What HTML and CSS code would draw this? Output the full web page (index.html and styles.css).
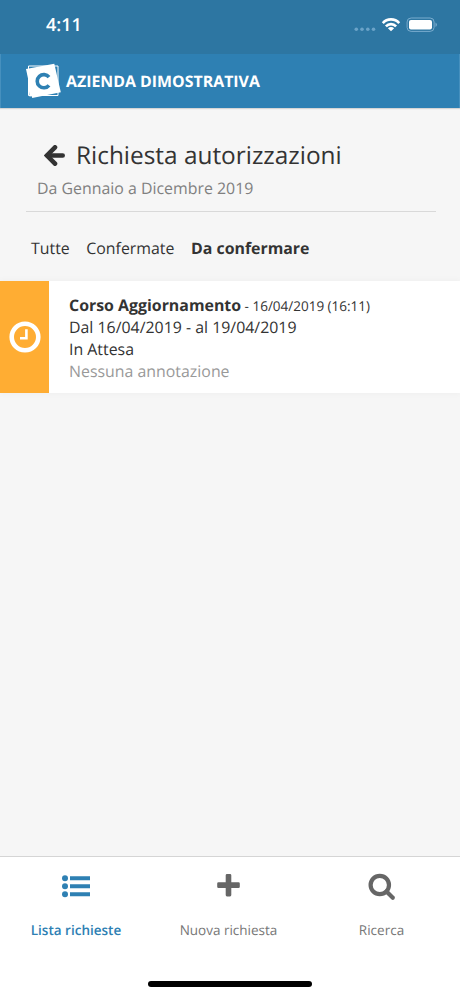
FILE: index.html
```html
<!DOCTYPE html>
<html lang="it">
<head>
<meta charset="utf-8">
<title>Richiesta autorizzazioni</title>
<link rel="stylesheet" href="styles.css">
</head>
<body>
<div class="app">
  <div class="status">
    <span class="time">4:11</span>
    <svg class="indicators" width="84" height="18" viewBox="0 0 84 18">
      <g fill="#6ba3c8"><circle cx="3.3" cy="13.3" r="1.8"/><circle cx="9" cy="13.3" r="1.8"/><circle cx="14.8" cy="13.3" r="1.8"/><circle cx="20.5" cy="13.3" r="1.8"/></g>
      <g fill="none" stroke="#fff" stroke-width="2.6"><path d="M29.8 7.1a10.9 10.9 0 0 1 16.4 0"/><path d="M32.9 10.3a7 7 0 0 1 10.2 0"/></g>
      <path fill="#fff" d="M34.9 12.3a4.3 4.3 0 0 1 6.2 0L38 15.3z"/>
      <rect x="54.1" y="2" width="27" height="13.4" rx="4" fill="none" stroke="#79acce"/>
      <rect x="56" y="4" width="23" height="9.5" rx="2" fill="#fff"/>
      <path d="M82.5 6.5a2.5 2.5 0 0 1 0 4.5z" fill="#79acce"/>
    </svg>
  </div>
  <header class="header">
    <svg class="logo" width="36" height="36" viewBox="0 0 36 36">
      <path d="M3.5 3H33V32.5H3.500z" fill="none" stroke="#fff" stroke-width="1"/>
      <path d="M3 18L4.500 33.500L20 32z" fill="#fff"/>
      <path d="M1 6L29.300.8L35.800 29.200L7.200 35z" fill="#fff"/>
      <path d="M24 14.100a6.600 6.600 0 1 0 0 8.200" fill="none" stroke="#2e80b3" stroke-width="3.600"/>
    </svg>
    <span class="company">AZIENDA DIMOSTRATIVA</span>
  </header>
  <main class="content">
    <section class="heading">
      <div class="title-row">
        <svg width="21" height="21" viewBox="0 0 21 21" fill="none" stroke="#333" stroke-width="4.6" stroke-linecap="round"><path d="M3.500 10.500H18.700"/><path d="M11 2.300L2.900 10.500L11 18.700"/></svg>
        <h1>Richiesta autorizzazioni</h1>
      </div>
      <p class="period">Da Gennaio a Dicembre 2019</p>
    </section>
    <nav class="filters">
      <span>Tutte</span>
      <span>Confermate</span>
      <span class="selected">Da confermare</span>
    </nav>
    <article class="card">
      <div class="state">
        <svg width="32" height="32" viewBox="0 0 32 32" fill="none" stroke="#fff"><circle cx="16" cy="16" r="13.3" stroke-width="4.6"/><path d="M17.400 8.200V17.200H11" stroke-width="2.600"/></svg>
      </div>
      <div class="details">
        <div><b>Corso Aggiornamento</b><small> - 16/04/2019 (16:11)</small></div>
        <div>Dal 16/04/2019 - al 19/04/2019</div>
        <div>In Attesa</div>
        <div class="note">Nessuna annotazione</div>
      </div>
    </article>
  </main>
  <footer class="tabbar">
    <div class="tab active">
      <svg width="30" height="30" viewBox="0 0 30 30" fill="#2e80b3"><circle cx="4" cy="7.200" r="3"/><circle cx="4" cy="15.200" r="3"/><circle cx="4" cy="23.200" r="3"/><path d="M9 5.200h20v4H9zM9 13.200h20v4H9zM9 21.200h20v4H9z"/></svg>
      <span>Lista richieste</span>
    </div>
    <div class="tab">
      <svg width="30" height="30" viewBox="0 0 30 30" fill="#666"><path d="M13.500 3h2.500q1.300 0 1.300 1.300v7h7.200q1.300 0 1.300 1.300v3.200q0 1.300-1.300 1.300h-7.200v7q0 1.300-1.300 1.300h-3q-1.300 0-1.300-1.300v-7h-7.200q-1.300 0-1.300-1.300v-3.200q0-1.300 1.300-1.300h7.200v-7q0-1.300 1.300-1.300z"/></svg>
      <span>Nuova richiesta</span>
    </div>
    <div class="tab">
      <svg width="30" height="30" viewBox="0 0 30 30" fill="none" stroke="#666" stroke-width="4.200"><circle cx="12.800" cy="14" r="9.200"/><path d="M19.500 20.500L25.800 26.800" stroke-linecap="round"/></svg>
      <span>Ricerca</span>
    </div>
    <div class="home"></div>
  </footer>
</div>
</body>
</html>
```
FILE: styles.css
```css
* { box-sizing: border-box; }
body { margin: 0; font-family: "Open Sans", sans-serif; color: #333; background: #f6f6f6; text-rendering: geometricPrecision; }
svg { display: block; flex: none; }
h1, p { margin: 0; }
.app { width: 460px; height: 996px; display: flex; flex-direction: column; white-space: nowrap; overflow: hidden; }
.status { height: 54px; background: #2d76a2; display: flex; justify-content: space-between; padding: 0 23px 0 46px; color: #fff; }
.time { font-size: 18px; font-weight: 600; line-height: 50px; }
.indicators { margin-top: 16px; }
.header { height: 54px; background: #2e80b3; display: flex; align-items: center; gap: 5px; padding-left: 24px; border: solid #4690be; border-width: 0 1px; color: #fff; box-shadow: 0 1px 1px #d5d5d5; }
.company { font-size: 15.9px; font-weight: 700; }
.content { flex: 1; display: flex; flex-direction: column; }
.heading { margin: 30px 24px 0 26px; padding: 0 0 12px 11px; height: 74px; border-bottom: 1px solid #d9d9d9; }
.title-row { display: flex; align-items: center; height: 35px; padding-left: 7px; gap: 11px; }
h1 { font-size: 24.4px; font-weight: 400; line-height: 34px; }
.period { margin-top: 4px; font-size: 15.9px; line-height: 22px; color: #808080; }
.filters { display: flex; gap: 16.5px; margin: 25px 0 0 31px; line-height: 22px; font-size: 15.9px; }
.selected { font-weight: 700; }
.card { margin-top: 22px; height: 112px; display: flex; background: #fff; box-shadow: 0 0 7px rgba(0,0,0,.045); }
.state { width: 49px; background: #ffad33; display: flex; align-items: center; justify-content: center; }
.details { padding: 13px 0 0 20px; font-size: 15.9px; line-height: 22px; }
small { font-size: 13.5px; line-height: 1; }
.note { color: #999; }
.tabbar { height: 140px; background: #fff; border-top: 1px solid #d5d5d5; display: grid; grid-template-columns: 152px 153px 153px; position: relative; }
.tab { display: flex; flex-direction: column; align-items: center; padding-top: 14px; font-size: 13.5px; line-height: 20px; color: #777; }
.tab span { margin-top: 19px; }
.active { color: #2e80b3; font-weight: 600; }
.home { position: absolute; left: 148px; bottom: 9px; width: 164px; height: 6px; border-radius: 3px; background: #000; }
```
